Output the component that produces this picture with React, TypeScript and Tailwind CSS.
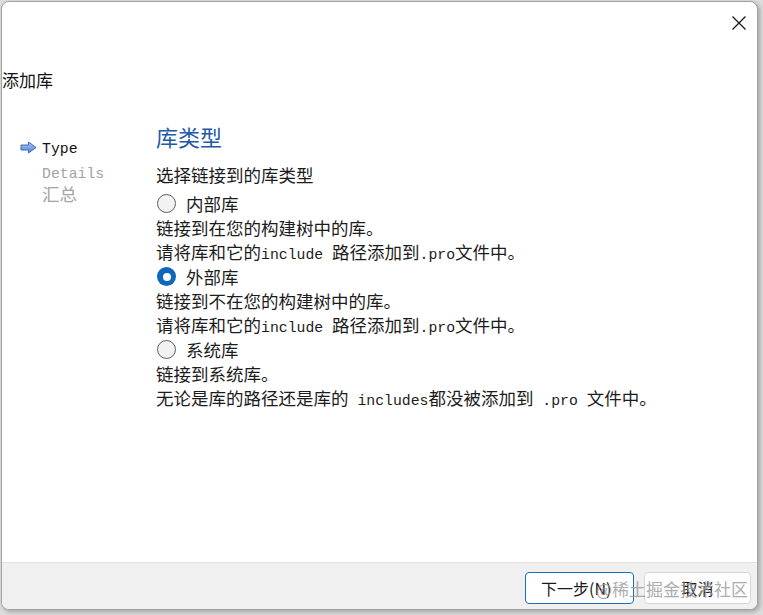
import React from "react";

const CJK = '"Noto Sans CJK SC", "Noto Sans", sans-serif';
const MONO = '"Liberation Mono", monospace';

function M({ children }: { children: React.ReactNode }) {
  return (
    <span className="text-[14.8px]" style={{ fontFamily: MONO }}>
      {children}
    </span>
  );
}

function Radio({ checked }: { checked?: boolean }) {
  if (checked) {
    return (
      <span className="flex h-[19px] w-[19px] items-center justify-center rounded-full bg-[#0f67bd]">
        <span className="block h-[8px] w-[8px] rounded-full bg-white" />
      </span>
    );
  }
  return <span className="block h-[19px] w-[19px] rounded-full border border-[#606060] bg-[#f2f2f2]" />;
}

function RadioRow({ checked, label, className }: { checked?: boolean; label: string; className?: string }) {
  return (
    <div className={"flex h-[25px] items-center " + (className ?? "")}>
      <span className="ml-[1px] block">
        <Radio checked={checked} />
      </span>
      <span className="ml-[10px] leading-[25px]">{label}</span>
    </div>
  );
}

function Line({ children }: { children: React.ReactNode }) {
  return <div className="h-[24px] leading-[24px] whitespace-pre">{children}</div>;
}

export default function App() {
  return (
    <div className="h-[615px] w-[763px] overflow-hidden bg-[#dcdcdc]" style={{ fontFamily: CJK }}>
      <div className="ml-[1px] mt-[1px] flex h-[609px] w-[757px] flex-col overflow-hidden rounded-[8px] border border-[#a3a3a3] bg-white shadow-[2px_2px_4px_rgba(0,0,0,0.25)]">
        {/* top bar */}
        <div className="flex h-[66px] justify-end">
          <div className="mr-[10px] mt-[13px] flex h-[16px] w-[16px] items-center justify-center">
            <svg width="16" height="16" viewBox="0 0 16 16">
              <path d="M1.5 1.5 L14.5 14.5 M14.5 1.5 L1.5 14.5" stroke="#1a1a1a" strokeWidth="1.3" fill="none" />
            </svg>
          </div>
        </div>
        <div className="h-[24px] text-[17px] leading-[24px] text-[#111]">添加库</div>

        {/* body */}
        <div className="flex flex-1 text-[17.5px] text-[#1c1c1c]">
          <div className="w-[154px] pl-[18px] pt-[43px]">
            <div className="flex h-[24px] items-center">
              <svg width="17" height="13" viewBox="0 0 17 13">
                <defs>
                  <linearGradient id="ag" x1="0" y1="0" x2="0" y2="1">
                    <stop offset="0" stopColor="#a9c8f2" />
                    <stop offset="1" stopColor="#4f86d6" />
                  </linearGradient>
                </defs>
                <path d="M1 4 H8.5 V1 L16 6.5 L8.5 12 V9 H1 Z" fill="url(#ag)" stroke="#3a6cbc" strokeWidth="1" strokeLinejoin="round" />
              </svg>
              <span className="ml-[5px] leading-[24px] text-[#111]">
                <M>Type</M>
              </span>
            </div>
            <div className="h-[24px] pl-[22px] leading-[24px] text-[#a3a3a3]">
              <M>Details</M>
            </div>
            <div className="h-[24px] pl-[22px] leading-[22px] text-[#a3a3a3]">汇总</div>
          </div>

          <div className="flex-1 pt-[28px]">
            <div className="h-[32px] text-[22px] leading-[32px] text-[#2459a8]">库类型</div>
            <div className="mt-[11px]">
              <Line>选择链接到的库类型</Line>
            </div>
            <RadioRow label="内部库" className="mt-[4px]" />
            <Line>链接到在您的构建树中的库。</Line>
            <Line>
              请将库和它的<M>include </M>路径添加到<M>.pro</M>文件中。
            </Line>
            <RadioRow checked label="外部库" />
            <Line>链接到不在您的构建树中的库。</Line>
            <Line>
              请将库和它的<M>include </M>路径添加到<M>.pro</M>文件中。
            </Line>
            <RadioRow label="系统库" />
            <Line>链接到系统库。</Line>
            <Line>
              无论是库的路径还是库的<M> includes</M>都没被添加到<M> .pro </M>文件中。
            </Line>
          </div>
        </div>

        {/* footer */}
        <div className="relative flex h-[47px] justify-end gap-[10px] border-t border-[#e3e3e3] bg-[#f0f0f0] pr-[6px] pt-[9px]">
          <button className="flex h-[32px] w-[109px] items-center justify-start rounded-[4px] border border-[#1a6fc2] bg-white pl-[15px] text-[16px] text-[#1a1a1a]">
            下一步(N)
          </button>
          <button className="flex h-[32px] w-[107px] items-center justify-center rounded-[4px] border border-[#d6d6d6] bg-[#fdfdfd] text-[16px] text-[#1a1a1a]">
            取消
          </button>
          <div className="pointer-events-none absolute right-[9px] top-[14px] text-[17px] leading-[24px] text-[#9a9a9a] opacity-80">
            @稀土掘金技术社区
          </div>
        </div>
      </div>
    </div>
  );
}
